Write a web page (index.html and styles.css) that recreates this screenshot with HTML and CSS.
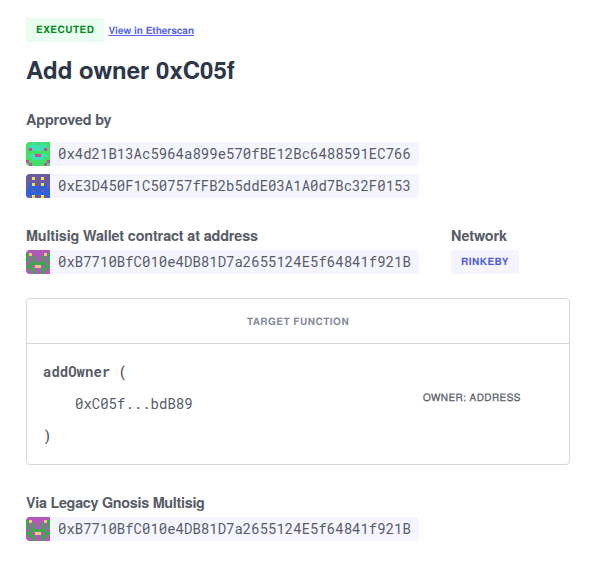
FILE: index.html
```html
<!DOCTYPE html>
<html lang="en">
<head>
<meta charset="utf-8">
<title>Add owner 0xC05f</title>
<link rel="stylesheet" href="styles.css">
</head>
<body>
<svg class="defs" aria-hidden="true">
  <symbol id="blockie-a" viewBox="0 0 8 8">
    <path fill="#42e062" d="M0 0h8v8H0z"/>
    <path fill="#40dfaf" d="M2 0h1v1H2zM5 0h1v1H5zM1 1h6v1H1zM2 2h4v1H2zM1 4h2v1H1zM5 4h2v1H5zM2 5h4v1H2z"/>
    <path fill="#c14da0" d="M1 2h1v1H1zM6 2h1v1H6zM3 4h2v1H3zM0 6h1v1H0zM7 6h1v1H7zM1 7h1v1H1zM6 7h1v1H6z"/>
  </symbol>
  <symbol id="blockie-b" viewBox="0 0 8 8">
    <path fill="#6a5a9f" d="M0 0h8v8H0z"/>
    <path fill="#2d62da" d="M1 3h1v1H1zM6 3h1v1H6zM1 4h6v1H1zM0 5h2v1H0zM3 5h2v1H3zM6 5h2v1H6zM0 6h8v1H0zM0 7h1v1H0zM7 7h1v1H7z"/>
    <path fill="#f0e050" d="M2 1h1v1H2zM5 1h1v1H5zM2 3h1v1H2zM5 3h1v1H5zM2 7h1v1H2zM5 7h1v1H5z"/>
  </symbol>
  <symbol id="blockie-c" viewBox="0 0 8 8">
    <path fill="#b159b8" d="M0 0h8v8H0z"/>
    <path fill="#3fa650" d="M0 1h1v3H0zM7 1h1v3H7zM2 2h1v2H2zM5 2h1v2H5zM1 4h6v1H1zM0 5h2v1H0zM6 5h2v1H6zM1 6h2v1H1zM5 6h2v1H5zM2 7h1v1H2zM5 7h1v1H5z"/>
    <path fill="#f5c583" d="M1 1h1v1H1zM6 1h1v1H6zM3 5h2v1H3z"/>
  </symbol>
</svg>
<main class="page">
  <div class="status">
    <span class="tag tag-success">Executed</span>
    <a class="link" href="#">View in Etherscan</a>
  </div>
  <h1>Add owner 0xC05f</h1>
  <section class="approvals">
    <h2>Approved by</h2>
    <div class="address"><svg class="blockie"><use href="#blockie-a"/></svg><span>0x4d21B13Ac5964a899e570fBE12Bc6488591EC766</span></div>
    <div class="address"><svg class="blockie"><use href="#blockie-b"/></svg><span>0xE3D450F1C50757fFB2b5ddE03A1A0d7Bc32F0153</span></div>
  </section>
  <section class="contract">
    <div>
      <h2>Multisig Wallet contract at address</h2>
      <div class="address"><svg class="blockie"><use href="#blockie-c"/></svg><span>0xB7710BfC010e4DB81D7a2655124E5f64841f921B</span></div>
    </div>
    <div>
      <h2>Network</h2>
      <span class="tag tag-network">Rinkeby</span>
    </div>
  </section>
  <section class="function">
    <header>Target function</header>
    <div class="call">
      <div class="name"><b>addOwner</b> (</div>
      <div class="arg"><span>0xC05f...bdB89</span></div>
      <div class="name paren">)</div>
      <span class="type">owner: address</span>
    </div>
  </section>
  <section class="via">
    <h2>Via Legacy Gnosis Multisig</h2>
    <div class="address"><svg class="blockie"><use href="#blockie-c"/></svg><span>0xB7710BfC010e4DB81D7a2655124E5f64841f921B</span></div>
  </section>
</main>
</body>
</html>
```
FILE: styles.css
```css
* { box-sizing: border-box; }
body {
  margin: 0;
  background: #fff;
  color: #575c66;
  font-family: "TeX Gyre Heros", "Nimbus Sans", "Liberation Sans", sans-serif;
}
.defs { display: none; }
.page { padding: 18px 36px 0 26px; }
.status { display: flex; align-items: center; gap: 4px; height: 24px; }
.tag {
  display: inline-block;
  height: 24px;
  padding: 0 10px;
  font-size: 10px;
  line-height: 24px;
  font-weight: 700;
  letter-spacing: .5px;
  text-rendering: geometricPrecision;
  text-transform: uppercase;
}
.tag-success { color: #008a20; background: #ebfdf1; }
.tag-network { color: #4e5be0; background: #f5f5ff; }
.link { padding-top: 1px; color: #5765e6; font-size: 10px; font-weight: 700; text-rendering: geometricPrecision; }
h1 { margin: 11px 0 0; font-size: 24px; line-height: 32px; color: #2d3748; }
h2 { margin: 0; font-size: 14.4px; line-height: 24px; letter-spacing: -.15px; font-weight: 700; color: #575c66; }
.approvals { display: grid; justify-items: start; margin-top: 22px; }
.approvals .address { margin-bottom: 8px; }
.approvals h2 { margin-bottom: 11px; }
.address {
  display: inline-flex;
  align-items: center;
  gap: 8px;
  height: 24px;
  width: 393px;
  overflow: hidden;
  border-radius: 4px;
  background: #f5f5ff;
  font: 14px/24px "Roboto Mono", "Liberation Mono", monospace;
  vertical-align: top;
}
.blockie { width: 24px; height: 24px; shape-rendering: crispEdges; }
.contract { display: grid; grid-template-columns: 425px auto; margin-top: 17px; line-height: 24px; }
.contract h2 { margin-bottom: 3px; }
.contract .tag { vertical-align: top; }
.function { margin: 24px 0 25px; border: 1px solid #d7d8df; border-radius: 4px; }
.function header {
  height: 45px;
  border-bottom: 1px solid #d7d8df;
  font-size: 10px;
  line-height: 46px;
  font-weight: 700;
  letter-spacing: .5px;
  text-rendering: geometricPrecision;
  text-align: center;
  text-transform: uppercase;
  color: #868b98;
}
.call {
  display: grid;
  grid-template-columns: 396px auto;
  grid-template-rows: repeat(3, 32px);
  align-items: center;
  height: 120px;
  padding-top: 12px;
  font: 14px/32px "Roboto Mono", "Liberation Mono", monospace;
}
.name { grid-column: 1; padding-left: 16px; font-weight: 500; }
.arg { grid-column: 1; padding-left: 48px; }
.type {
  grid-column: 2;
  grid-row: 2;
  margin-top: -14px;
  font: 500 10px/18px "TeX Gyre Heros", "Nimbus Sans", "Liberation Sans", sans-serif;
  letter-spacing: .42px;
  -webkit-text-stroke: .25px currentColor;
  text-rendering: geometricPrecision;
  text-transform: uppercase;
}
.via h2 { margin-bottom: 3px; letter-spacing: -.3px; }
```
